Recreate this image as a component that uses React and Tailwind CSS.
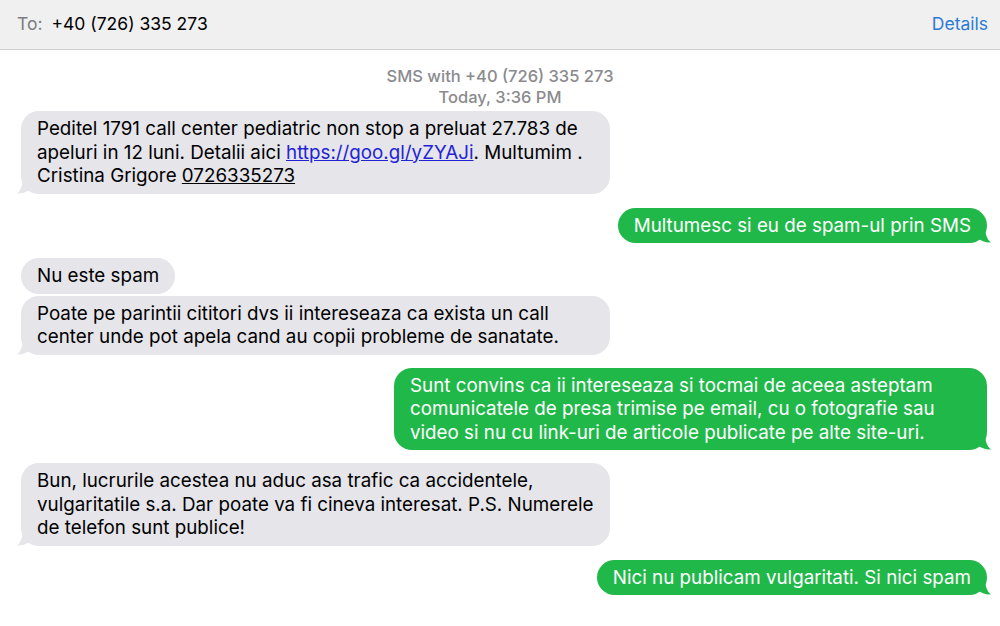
import React from "react";

const font = { fontFamily: 'Inter, "Liberation Sans", Arial, sans-serif' };

function Tail({ side, color }) {
  const isLeft = side === "left";
  return (
    <svg
      width="14"
      height="18"
      viewBox="0 0 14 18"
      className={
        "absolute bottom-0 " + (isLeft ? "left-[-4px]" : "right-[-4px] scale-x-[-1]")
      }
    >
      <path d="M6 0 C6 8 4.5 14 0 17.5 C5 17.8 10 16 13.5 13 L14 0 Z" fill={color} />
    </svg>
  );
}

function Incoming({ children, tail, wide }) {
  return (
    <div className="flex justify-start">
      <div
        className={
          "relative bg-[#e5e5ea] text-black rounded-[18px] px-4 py-[6px] text-[18.8px] leading-[23.5px] whitespace-nowrap " +
          (wide ? "w-[589px]" : "w-fit")
        }
      >
        {tail && <Tail side="left" color="#e5e5ea" />}
        <div className="relative">{children}</div>
      </div>
    </div>
  );
}

function Outgoing({ children, wide }) {
  return (
    <div className="flex justify-end">
      <div
        className={
          "relative bg-[#21b84a] text-white rounded-[18px] px-4 py-[6px] text-[18.8px] leading-[23.5px] whitespace-nowrap " +
          (wide ? "w-[593px]" : "w-fit")
        }
      >
        <Tail side="right" color="#21b84a" />
        <div className="relative">{children}</div>
      </div>
    </div>
  );
}

export default function App() {
  return (
    <div className="w-[1000px] h-[626px] bg-white overflow-hidden" style={font}>
      <div className="h-[50px] bg-[#f0f0f0] border-b border-[#cfcfcf] flex items-center justify-between pl-[17px] pr-[12px] text-[17.5px]">
        <div>
          <span className="text-[#7d7d82]">To:</span>
          <span className="text-black ml-[9px]">+40 (726) 335 273</span>
        </div>
        <span className="text-[#2b7bd6]">Details</span>
      </div>

      <div className="pt-[16px] text-center text-[16.5px] leading-[21px] font-medium text-[#8a8a8e]">
        <div>SMS with +40 (726) 335 273</div>
        <div>Today, 3:36 PM</div>
      </div>

      <div className="pl-[21px] pr-[13px] pt-[3px] flex flex-col">
        <Incoming tail wide>
          Peditel 1791 call center pediatric non stop a preluat 27.783 de
          <br />
          apeluri in 12 luni. Detalii aici{" "}
          <span className="text-[#2323d6] underline">https://goo.gl/yZYAJi</span>. Multumim .
          <br />
          Cristina Grigore <span className="underline">0726335273</span>
        </Incoming>

        <div className="h-[14px]" />
        <Outgoing>Multumesc si eu de spam-ul prin SMS</Outgoing>

        <div className="h-[15px]" />
        <Incoming>Nu este spam</Incoming>
        <div className="h-[2px]" />
        <Incoming tail wide>
          Poate pe parintii cititori dvs ii intereseaza ca exista un call
          <br />
          center unde pot apela cand au copii probleme de sanatate.
        </Incoming>

        <div className="h-[13px]" />
        <Outgoing wide>
          Sunt convins ca ii intereseaza si tocmai de aceea asteptam
          <br />
          comunicatele de presa trimise pe email, cu o fotografie sau
          <br />
          video si nu cu link-uri de articole publicate pe alte site-uri.
        </Outgoing>

        <div className="h-[13px]" />
        <Incoming tail wide>
          Bun, lucrurile acestea nu aduc asa trafic ca accidentele,
          <br />
          vulgaritatile s.a. Dar poate va fi cineva interesat. P.S. Numerele
          <br />
          de telefon sunt publice!
        </Incoming>

        <div className="h-[14px]" />
        <Outgoing>Nici nu publicam vulgaritati. Si nici spam</Outgoing>
      </div>
    </div>
  );
}
